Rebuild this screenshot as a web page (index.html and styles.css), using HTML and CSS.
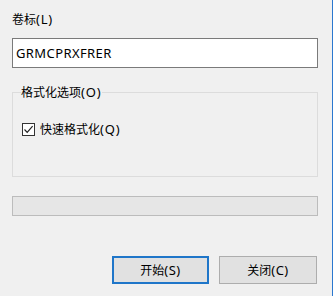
FILE: index.html
```html
<!DOCTYPE html>
<html lang="zh-CN">
<head>
<meta charset="utf-8">
<link rel="stylesheet" href="styles.css">
</head>
<body>
<div class="dialog">
  <label class="field-label" for="vol">卷标<span class="key">(L)</span></label>
  <input class="text-input" id="vol" type="text" value="GRMCPRXFRER">
  <fieldset class="group">
    <legend class="group-title">格式化选项<span class="key">(O)</span></legend>
    <div class="check-row">
      <span class="checkbox">
        <svg width="11" height="11" viewBox="0 0 11 11"><path d="M1.5 5.5 L4.2 8.3 L9.6 2.2" fill="none" stroke="#222" stroke-width="1.2"/></svg>
      </span>
      <span class="check-text">快速格式化<span class="key">(Q)</span></span>
    </div>
  </fieldset>
  <div class="progress"></div>
  <div class="buttons">
    <button class="btn btn-default">开始<span class="key">(S)</span></button>
    <button class="btn btn-close">关闭<span class="key">(C)</span></button>
  </div>
</div>
</body>
</html>
```
FILE: styles.css
```css
html, body {
  margin: 0;
  padding: 0;
  height: 100%;
}
body {
  background: #f0f0f0;
  font-family: "Noto Sans", "Noto Sans CJK SC", sans-serif;
  font-size: 12px;
  color: #000;
}
.dialog {
  box-sizing: border-box;
  width: 333px;
  height: 296px;
  padding: 11px 14px 0 12px;
  border-right: 1px solid #2b78cf;
  display: flex;
  flex-direction: column;
}
.key {
  font-size: 13px;
  letter-spacing: 0.8px;
}
.field-label {
  display: block;
  line-height: 16px;
  height: 16px;
}
.text-input {
  box-sizing: border-box;
  margin: 11px 0 0 0;
  width: 306px;
  height: 30px;
  border: 1px solid #7a7a7a;
  background: #fff;
  padding: 0 4px 1px 3px;
  font-family: "Noto Sans", "Noto Sans CJK SC", sans-serif;
  font-size: 13px;
  letter-spacing: 0.4px;
  color: #000;
  outline: none;
}
.group {
  box-sizing: border-box;
  margin: 16px 0 0 0;
  width: 306px;
  height: 93px;
  border: 1px solid #dcdcdc;
  padding: 0 9px 0 8px;
  min-width: 0;
}
.group-title {
  padding: 0 1px 0 0;
  line-height: 16px;
}
.check-row {
  display: flex;
  align-items: center;
  margin-top: 20px;
  height: 16px;
}
.checkbox {
  box-sizing: border-box;
  width: 13px;
  height: 13px;
  border: 1px solid #333;
  background: #fff;
  display: flex;
  align-items: center;
  justify-content: center;
  margin-left: 1px;
}
.check-text {
  margin-left: 5px;
  line-height: 16px;
}
.progress {
  box-sizing: border-box;
  margin-top: 19px;
  width: 306px;
  height: 20px;
  border: 1px solid #bcbcbc;
  background: #e6e6e6;
}
.buttons {
  display: flex;
  justify-content: flex-end;
  gap: 10px;
  margin-top: 40px;
  padding-right: 1px;
}
.btn {
  box-sizing: border-box;
  height: 28px;
  margin: 0;
  padding: 0 0 1px 0;
  background: #e1e1e1;
  border: 1px solid #adadad;
  font-family: "Noto Sans", "Noto Sans CJK SC", sans-serif;
  font-size: 12px;
  color: #000;
}
.btn .key {
  letter-spacing: 0.5px;
}
.btn-default {
  width: 97px;
  border: 2px solid #1f76c9;
}
.btn-close {
  width: 98px;
}
```
